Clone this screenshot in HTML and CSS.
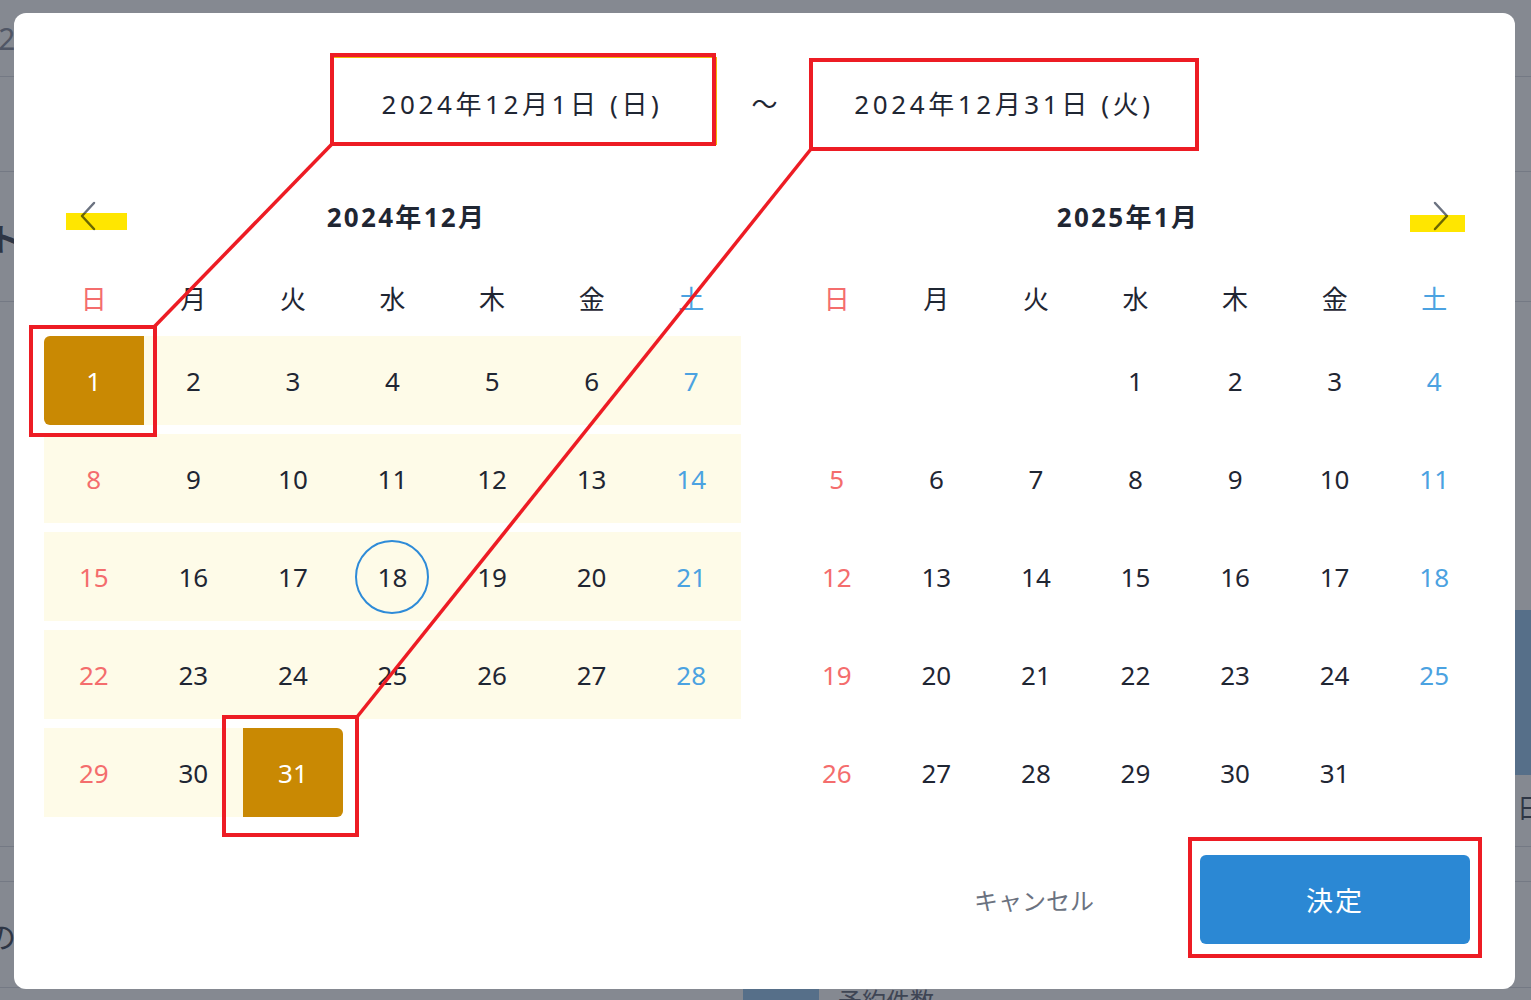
FILE: index.html
```html
<!DOCTYPE html>
<html lang="ja">
<head>
<meta charset="utf-8">
<title>期間選択</title>
<link rel="stylesheet" href="styles.css">
</head>
<body>
<div class="page">
  <div class="pg-row pg-r1"><span class="pg-year">2024</span></div>
  <div class="pg-row pg-r2"></div>
  <div class="pg-row pg-r3"><span class="pg-kana">ト</span></div>
  <div class="pg-row pg-r4"><div class="pg-bar"></div></div>
  <div class="pg-row pg-r5"><span class="pg-day">日</span></div>
  <div class="pg-row pg-r6"></div>
  <div class="pg-row pg-r7"><span class="pg-kana2">の</span></div>
  <div class="pg-row pg-r8"><div class="pg-block"></div><span class="pg-label">予約件数</span></div>
</div>
<div class="backdrop"></div>

<div class="modal">
  <div class="range">
    <div class="date-input is-focused">2024年12月1日 (日)</div>
    <span class="tilde">～</span>
    <div class="date-input">2024年12月31日 (火)</div>
  </div>

  <div class="calendars">
    <section class="month">
      <header class="month-head month-head--prev">
        <button class="nav" type="button" aria-label="前の月">
          <svg width="16" height="30" viewBox="0 0 16 30"><path d="M14 2 L2 15 L14 28" fill="none" stroke="#6b7280" stroke-width="2.5" stroke-linecap="round" stroke-linejoin="round"/></svg>
        </button>
        <h2 class="month-title">2024年12月</h2>
      </header>
      <div class="weekdays">
        <span class="sun">日</span><span>月</span><span>火</span><span>水</span><span>木</span><span>金</span><span class="sat">土</span>
      </div>
      <div class="days">
        <div class="day in-range sun start">1</div>
        <div class="day in-range">2</div>
        <div class="day in-range">3</div>
        <div class="day in-range">4</div>
        <div class="day in-range">5</div>
        <div class="day in-range">6</div>
        <div class="day in-range sat">7</div>

        <div class="day in-range sun">8</div>
        <div class="day in-range">9</div>
        <div class="day in-range">10</div>
        <div class="day in-range">11</div>
        <div class="day in-range">12</div>
        <div class="day in-range">13</div>
        <div class="day in-range sat">14</div>

        <div class="day in-range sun">15</div>
        <div class="day in-range">16</div>
        <div class="day in-range">17</div>
        <div class="day in-range today"><span>18</span></div>
        <div class="day in-range">19</div>
        <div class="day in-range">20</div>
        <div class="day in-range sat">21</div>

        <div class="day in-range sun">22</div>
        <div class="day in-range">23</div>
        <div class="day in-range">24</div>
        <div class="day in-range">25</div>
        <div class="day in-range">26</div>
        <div class="day in-range">27</div>
        <div class="day in-range sat">28</div>

        <div class="day in-range sun">29</div>
        <div class="day in-range">30</div>
        <div class="day in-range end">31</div>
      </div>
    </section>

    <section class="month">
      <header class="month-head month-head--next">
        <h2 class="month-title">2025年1月</h2>
        <button class="nav" type="button" aria-label="次の月">
          <svg width="16" height="30" viewBox="0 0 16 30"><path d="M2 2 L14 15 L2 28" fill="none" stroke="#6b7280" stroke-width="2.5" stroke-linecap="round" stroke-linejoin="round"/></svg>
        </button>
      </header>
      <div class="weekdays">
        <span class="sun">日</span><span>月</span><span>火</span><span>水</span><span>木</span><span>金</span><span class="sat">土</span>
      </div>
      <div class="days">
        <div class="day"></div>
        <div class="day"></div>
        <div class="day"></div>
        <div class="day">1</div>
        <div class="day">2</div>
        <div class="day">3</div>
        <div class="day sat">4</div>

        <div class="day sun">5</div>
        <div class="day">6</div>
        <div class="day">7</div>
        <div class="day">8</div>
        <div class="day">9</div>
        <div class="day">10</div>
        <div class="day sat">11</div>

        <div class="day sun">12</div>
        <div class="day">13</div>
        <div class="day">14</div>
        <div class="day">15</div>
        <div class="day">16</div>
        <div class="day">17</div>
        <div class="day sat">18</div>

        <div class="day sun">19</div>
        <div class="day">20</div>
        <div class="day">21</div>
        <div class="day">22</div>
        <div class="day">23</div>
        <div class="day">24</div>
        <div class="day sat">25</div>

        <div class="day sun">26</div>
        <div class="day">27</div>
        <div class="day">28</div>
        <div class="day">29</div>
        <div class="day">30</div>
        <div class="day">31</div>
        <div class="day"></div>
      </div>
    </section>
  </div>

  <div class="actions">
    <button class="btn-cancel" type="button">キャンセル</button>
    <button class="btn-ok" type="button">決定</button>
  </div>
</div>

<svg class="marks" width="1531" height="1000" viewBox="0 0 1531 1000" aria-hidden="true">
  <g fill="none" stroke="#ed1c24" stroke-width="4">
    <rect x="332" y="55" width="382" height="89"/>
    <rect x="811" y="60" width="386" height="89"/>
    <rect x="31" y="327" width="124" height="108"/>
    <rect x="224" y="717" width="133" height="118"/>
    <rect x="1190" y="839" width="290" height="117"/>
  </g>
  <g stroke="#ed1c24" stroke-width="3.5">
    <line x1="332" y1="144" x2="154" y2="327"/>
    <line x1="811" y1="149" x2="357" y2="717"/>
  </g>
</svg>
<svg class="highlights" width="1531" height="1000" viewBox="0 0 1531 1000" aria-hidden="true">
  <rect x="66" y="213" width="61" height="17" fill="#ffe600"/>
  <rect x="1410" y="215" width="55" height="17" fill="#ffe600"/>
</svg>
</body>
</html>
```

FILE: styles.css
```css
html, body {
  margin: 0;
  padding: 0;
}

body {
  width: 1531px;
  height: 1000px;
  overflow: hidden;
  background: #ffffff;
  font-family: "Noto Sans", "Noto Sans CJK JP", sans-serif;
  color: #1f2633;
}

/* ---------- underlying page (dimmed) ---------- */
.page {
  width: 1531px;
  height: 1000px;
  overflow: hidden;
  background: #f9fafb;
}

.pg-row {
  display: flex;
  align-items: center;
  border-bottom: 1px solid #d6dae0;
  box-sizing: border-box;
}

.pg-r1 { height: 77px; }
.pg-r2 { height: 95px; }
.pg-r3 { height: 130px; }
.pg-r4 { height: 465px; justify-content: flex-end; align-items: flex-start; border-bottom: 0; }
.pg-r5 { height: 80px; justify-content: flex-end; }
.pg-r6 { height: 35px; }
.pg-r7 { height: 106px; }
.pg-r8 { height: 12px; align-items: flex-start; border-bottom: 0; }

.pg-year {
  margin-left: -36px;
  font-size: 30px;
  color: #8e95a3;
}

.pg-kana {
  margin-left: -12px;
  font-size: 32px;
  font-weight: 700;
  color: #4b5563;
}

.pg-bar {
  margin-top: 308px;
  width: 40px;
  height: 165px;
  background: #9bc6ea;
}

.pg-day {
  margin-right: -12px;
  font-size: 26px;
  color: #4b5563;
}

.pg-kana2 {
  margin-left: -14px;
  font-size: 30px;
  color: #4b5563;
}

.pg-block {
  margin-left: 743px;
  width: 76px;
  height: 28px;
  background: #9bc6ea;
}

.pg-label {
  margin-left: 19px;
  margin-top: -6px;
  font-size: 24px;
  color: #6b7280;
}

.backdrop {
  position: fixed;
  inset: 0;
  background: rgba(17, 24, 39, 0.5);
}

/* ---------- modal ---------- */
.modal {
  position: fixed;
  left: 14px;
  top: 13px;
  width: 1501px;
  height: 976px;
  box-sizing: border-box;
  padding: 44px 31px 0 30px;
  background: #ffffff;
  border-radius: 12px;
}

.range {
  display: flex;
  align-items: center;
  height: 88px;
  margin-left: 289px;
}

.date-input {
  box-sizing: border-box;
  width: 384px;
  height: 88px;
  display: flex;
  align-items: center;
  justify-content: center;
  padding-top: 4px;
  font-size: 26px;
  letter-spacing: 3.6px;
  color: #1f2633;
  border: 1px solid transparent;
}

.date-input.is-focused {
  border-color: #f2b705;
  padding-right: 6px;
}

.tilde {
  width: 95px;
  text-align: center;
  font-size: 26px;
  color: #1f2633;
  padding-top: 4px;
}

.calendars {
  display: flex;
  gap: 46px;
  margin-top: 41px;
}

.month {
  width: 697px;
}

.month-head {
  display: flex;
  align-items: center;
  height: 60px;
  margin-bottom: 14px;
}

.month-head--prev { padding-left: 36px; }
.month-head--next { padding-right: 35px; }

.month-title {
  flex: 1;
  margin: 0;
  text-align: center;
  font-size: 26px;
  font-weight: 700;
  letter-spacing: 2.3px;
  color: #1f2633;
}

.month-head--prev .month-title { padding-right: 24px; }
.month-head--next .month-title { padding-left: 36px; }

.nav {
  display: flex;
  width: 16px;
  height: 30px;
  padding: 0;
  border: 0;
  background: none;
}

.weekdays {
  display: grid;
  grid-template-columns: repeat(7, 1fr);
  align-items: center;
  height: 76px;
  text-align: center;
  font-size: 26px;
  color: #1f2633;
}

.days {
  display: grid;
  grid-template-columns: repeat(7, 1fr);
  grid-auto-rows: 89px;
  row-gap: 9px;
}

.day {
  display: flex;
  align-items: center;
  justify-content: center;
  font-size: 26px;
  color: #1f2633;
}

.sun { color: #f46d6d; }
.sat { color: #4ba2e1; }

.in-range { background: #fefbe8; }

.start,
.end {
  background: #c98903;
  color: #ffffff;
}

.start { border-radius: 6px 0 0 6px; }
.end { border-radius: 0 6px 6px 0; }

.today span {
  box-sizing: border-box;
  width: 74px;
  height: 74px;
  display: flex;
  align-items: center;
  justify-content: center;
  border: 2px solid #2e8bd8;
  border-radius: 50%;
}

.actions {
  display: flex;
  justify-content: flex-end;
  align-items: center;
  gap: 66px;
  margin-top: 38px;
  padding-right: 14px;
}

.btn-cancel,
.btn-ok {
  font-family: inherit;
  height: 89px;
  border: 0;
  padding: 0;
}

.btn-cancel {
  width: 200px;
  background: none;
  font-size: 24px;
  color: #6b7280;
}

.btn-ok {
  width: 270px;
  border-radius: 6px;
  background: #2b88d4;
  color: #ffffff;
  font-size: 27px;
  letter-spacing: 2px;
}

/* ---------- annotations ---------- */
.marks,
.highlights {
  position: fixed;
  left: 0;
  top: 0;
  pointer-events: none;
}

.highlights {
  mix-blend-mode: multiply;
}
```
